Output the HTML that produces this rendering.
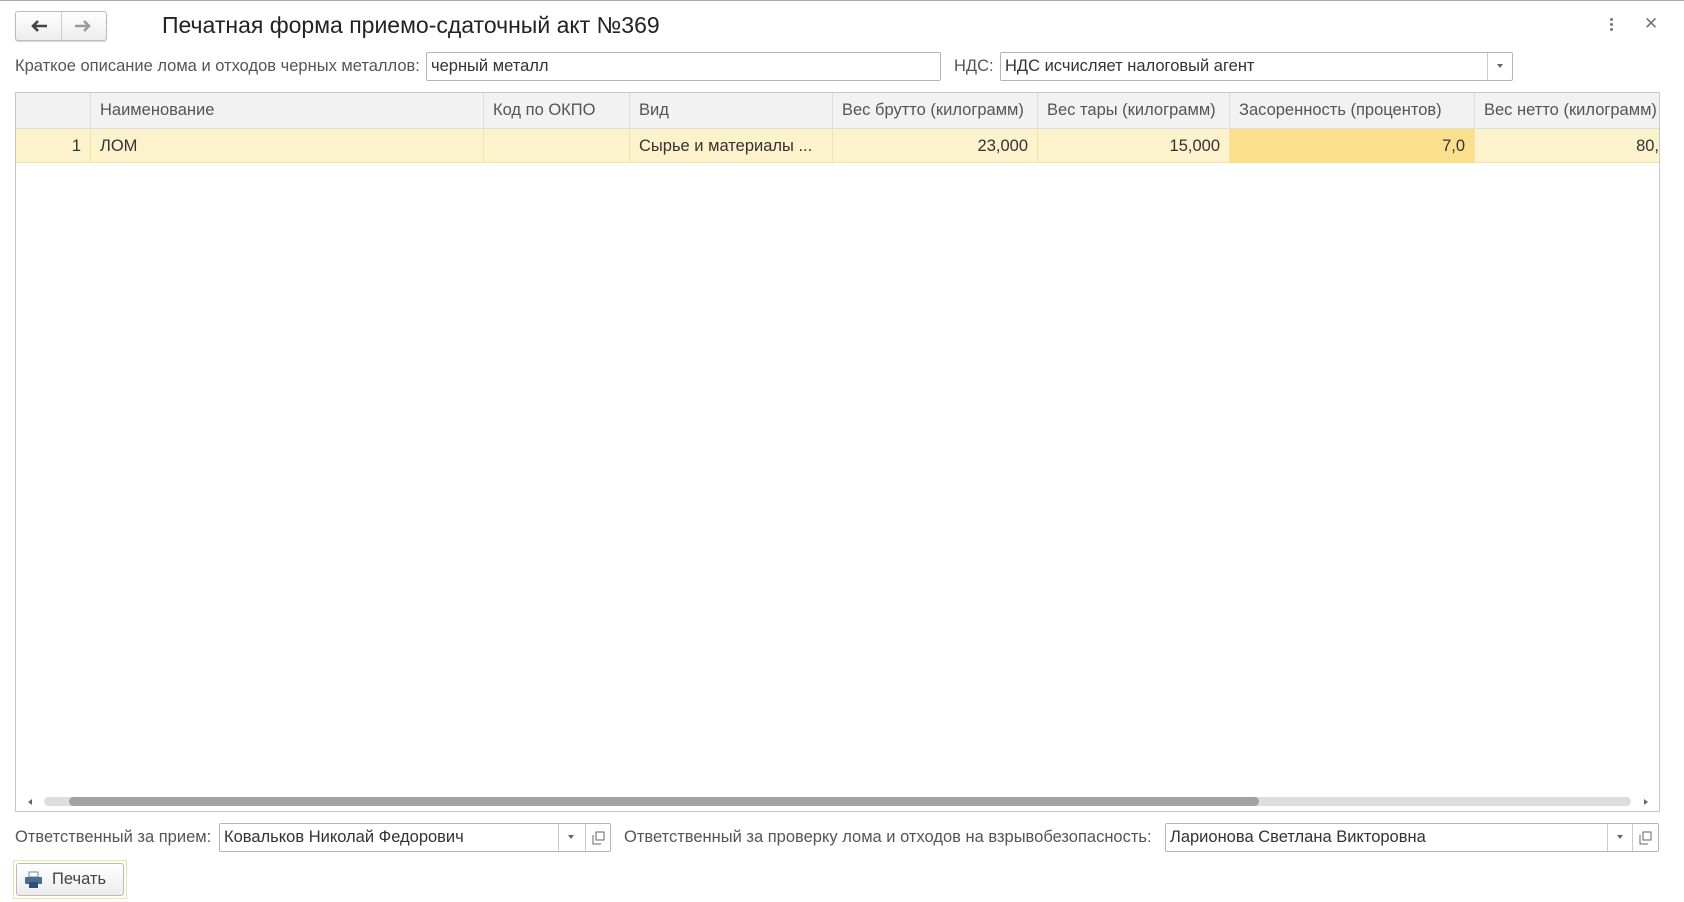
<!DOCTYPE html>
<html><head><meta charset="utf-8"><style>
*{box-sizing:border-box;margin:0;padding:0}
body{width:1684px;height:902px;background:#fff;font-family:"Liberation Sans",sans-serif;font-size:16.5px;color:#333;position:relative;overflow:hidden}
.a{position:absolute}
.lbl{color:#555;white-space:nowrap}
.inp{border:1px solid #b5b5b5;border-radius:2px;background:#fff;color:#333;padding-left:4px;display:flex;align-items:center;white-space:nowrap;overflow:hidden}
.th{position:absolute;top:0;height:36px;line-height:34px;border-right:1px solid #ddd;color:#555;padding-left:9px;white-space:nowrap;overflow:hidden}
.td{position:absolute;top:36px;height:34px;line-height:34px;border-right:1px solid #f3e3a8;color:#333;white-space:nowrap;overflow:hidden;padding:0 9px}
.r{text-align:right}
.btnsep{position:absolute;top:0;bottom:0;border-left:1px solid #ccc}
.tri{position:absolute;width:0;height:0;border-left:3px solid transparent;border-right:3px solid transparent;border-top:4px solid #666}
</style></head><body>
<div class="a" style="left:0;top:0;width:1684px;height:1px;background:#aaa"></div>
<div class="a" style="left:15px;top:11px;width:92px;height:30px;border:1px solid #bbb;border-radius:3px;background:linear-gradient(#fff,#ececec);box-shadow:0 1px 1px rgba(0,0,0,.15)"></div>
<div class="a" style="left:61px;top:12px;height:28px;border-left:1px solid #ccc"></div>
<svg class="a" style="left:29px;top:18px" width="20" height="16"><path d="M18 8H4M9 3L4 8l5 5" stroke="#444" stroke-width="2.6" fill="none"/></svg>
<svg class="a" style="left:73px;top:18px" width="20" height="16"><path d="M2 8h14M11 3l5 5-5 5" stroke="#999" stroke-width="2.6" fill="none"/></svg>
<div class="a" style="left:162px;top:12px;font-size:23px;color:#222">Печатная форма приемо-сдаточный акт №369</div>
<div class="a" style="left:1610px;top:18px;width:3px;height:3px;background:#777;border-radius:2px;box-shadow:0 5px 0 #777,0 10px 0 #777"></div>
<div class="a" style="left:1644px;top:14px;color:#777;font-size:17px">✕</div>
<div class="a lbl" style="left:15px;top:57px">Краткое описание лома и отходов черных металлов:</div>
<div class="a inp" style="left:426px;top:52px;width:515px;height:29px">черный металл</div>
<div class="a lbl" style="left:954px;top:57px">НДС:</div>
<div class="a inp" style="left:1000px;top:52px;width:513px;height:29px">НДС исчисляет налоговый агент
<div class="btnsep" style="left:486px"></div><div class="tri" style="left:496px;top:11px"></div></div>
<div class="a" style="left:15px;top:92px;width:1645px;height:720px;border:1px solid #c8c8c8;overflow:hidden">
<div class="a" style="left:0;top:0;width:1645px;height:36px;background:#f2f2f2;border-bottom:1px solid #ddd"></div>
<div class="th" style="left:0;width:75px"></div>
<div class="th" style="left:75px;width:393px">Наименование</div>
<div class="th" style="left:468px;width:146px">Код по ОКПО</div>
<div class="th" style="left:614px;width:203px">Вид</div>
<div class="th" style="left:817px;width:205px">Вес брутто (килограмм)</div>
<div class="th" style="left:1022px;width:192px">Вес тары (килограмм)</div>
<div class="th" style="left:1214px;width:245px">Засоренность (процентов)</div>
<div class="th" style="left:1459px;width:200px">Вес нетто (килограмм)</div>
<div class="a" style="left:0;top:36px;width:1645px;height:34px;background:#fcf2cc;border-bottom:1px solid #f0e2ad"></div>
<div class="td r" style="left:0;width:75px">1</div>
<div class="td" style="left:75px;width:393px">ЛОМ</div>
<div class="td" style="left:468px;width:146px"></div>
<div class="td" style="left:614px;width:203px">Сырье и материалы ...</div>
<div class="td r" style="left:817px;width:205px">23,000</div>
<div class="td r" style="left:1022px;width:192px">15,000</div>
<div class="td r" style="left:1214px;width:245px;background:#fae08c">7,0</div>
<div class="td r" style="left:1459px;width:184px;padding-right:0;border-right:none">80,</div>
<div class="a" style="left:12px;top:706px;width:0;height:0;border-top:3px solid transparent;border-bottom:3px solid transparent;border-right:4px solid #666"></div>
<div class="a" style="left:28px;top:704px;width:1587px;height:9px;background:#ddd;border-radius:5px"></div>
<div class="a" style="left:53px;top:704px;width:1190px;height:9px;background:#a2a2a2;border-radius:5px"></div>
<div class="a" style="left:1628px;top:706px;width:0;height:0;border-top:3px solid transparent;border-bottom:3px solid transparent;border-left:4px solid #666"></div>
</div>
<div class="a lbl" style="left:15px;top:828px">Ответственный за прием:</div>
<div class="a inp" style="left:219px;top:823px;width:392px;height:29px">Ковальков Николай Федорович
<div class="btnsep" style="left:338px"></div><div class="tri" style="left:348px;top:11px"></div>
<div class="btnsep" style="left:365px"></div>
<svg class="a" style="left:370px;top:6px" width="16" height="16"><path d="M6 2h8v8H6zM3 5v9h8" stroke="#666" fill="none"/></svg></div>
<div class="a lbl" style="left:624px;top:828px">Ответственный за проверку лома и отходов на взрывобезопасность:</div>
<div class="a inp" style="left:1165px;top:823px;width:494px;height:29px">Ларионова Светлана Викторовна
<div class="btnsep" style="left:441px"></div><div class="tri" style="left:451px;top:11px"></div>
<div class="btnsep" style="left:466px"></div>
<svg class="a" style="left:471px;top:6px" width="16" height="16"><path d="M6 2h8v8H6zM3 5v9h8" stroke="#666" fill="none"/></svg></div>
<div class="a" style="left:13px;top:860px;width:114px;height:39px;border:1px solid #f0e49a"></div>
<div class="a" style="left:16px;top:863px;width:108px;height:33px;border:1px solid #bbb;border-radius:3px;background:linear-gradient(#fff,#ececec)"></div>
<svg class="a" style="left:24px;top:871px" width="20" height="18"><rect x="5" y="1" width="9" height="5" fill="#fff" stroke="#6a8bb0"/><rect x="1" y="6" width="17" height="7" rx="1" fill="#4a6d96"/><rect x="5" y="11" width="9" height="6" fill="#2f4f78"/></svg>
<div class="a" style="left:52px;top:870px;color:#444">Печать</div>
</body></html>
